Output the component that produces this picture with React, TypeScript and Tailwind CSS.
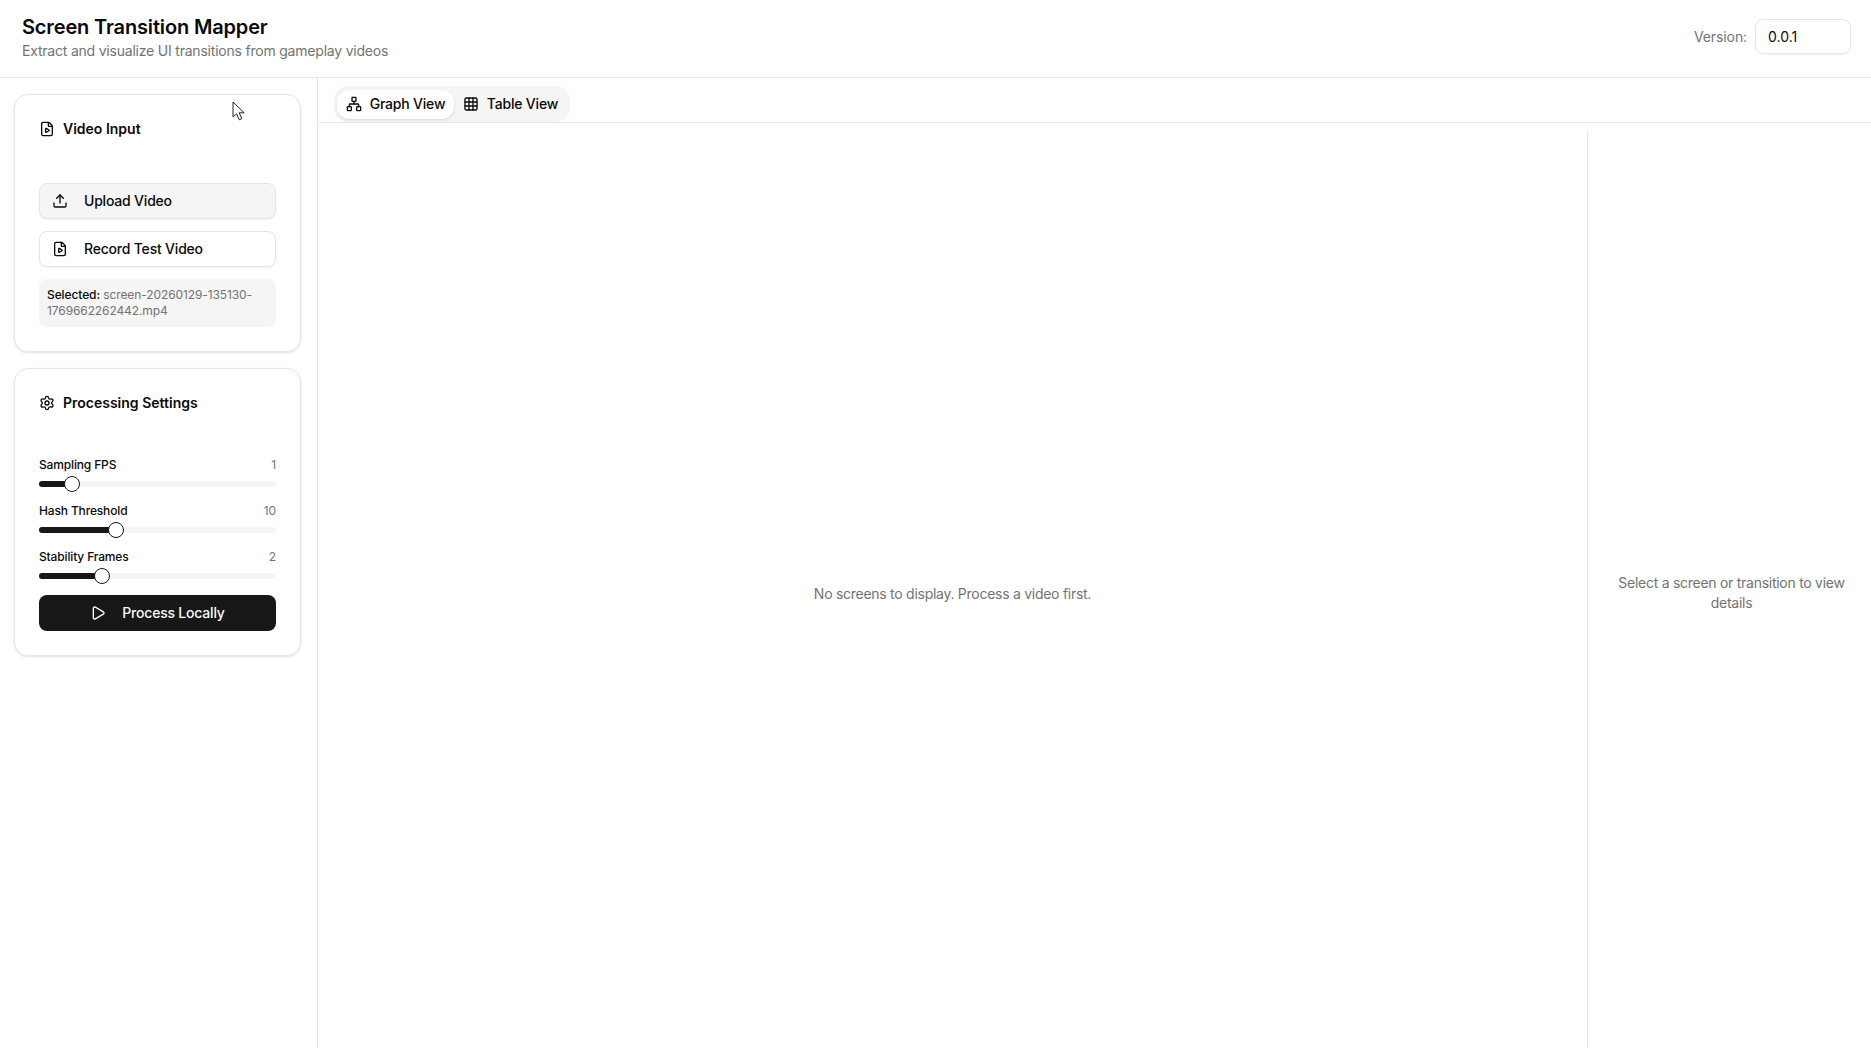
import { FilePlay, Grid3x3, Network, Play, Settings, Upload } from 'lucide-react'

const sliders = [
  { label: 'Sampling FPS', value: '1', percent: 14 },
  { label: 'Hash Threshold', value: '10', percent: 32.5 },
  { label: 'Stability Frames', value: '2', percent: 26.5 },
]

function Cursor() {
  return (
    <svg className="absolute left-[232px] top-[101px] h-[20px] w-[14px]" viewBox="0 0 14 20">
      <path
        d="M1 1v15l3.6-3.2 2.6 6 2.6-1.1-2.6-5.9h5z"
        fill="#fff"
        stroke="#222"
        strokeWidth="1"
        strokeLinejoin="round"
      />
    </svg>
  )
}

export default function App() {
  return (
    <div className="relative flex h-[1048px] flex-col overflow-hidden bg-white font-['Inter',sans-serif] text-[#0a0a0a]">
      {/* Header */}
      <header className="flex h-[78px] shrink-0 items-center justify-between border-b border-[#e5e5e5] pb-[4px] pl-[22px] pr-[20px]">
        <div>
          <h1 className="text-[20px] font-semibold leading-[28px] tracking-[-0.15px]">Screen Transition Mapper</h1>
          <p className="text-[14px] leading-[20px] tracking-[-0.21px] text-[#737373]">
            Extract and visualize UI transitions from gameplay videos
          </p>
        </div>
        <div className="flex items-center gap-2">
          <span className="text-[14px] tracking-[-0.1px] text-[#737373]">Version:</span>
          <div className="flex h-[35px] w-[96px] items-center rounded-lg border border-[#e5e5e5] pl-3 text-[14px] shadow-xs">
            0.0.1
          </div>
        </div>
      </header>

      <div className="flex min-h-0 flex-1">
        {/* Sidebar */}
        <aside className="flex w-[318px] shrink-0 flex-col gap-4 border-r border-[#e5e5e5] pl-[14px] pr-[16px] pt-[16px]">
          <section className="flex h-[258px] flex-col rounded-[14px] border border-[#e5e5e5] px-[24px] pt-[24px] shadow-sm">
            <h2 className="flex items-center gap-2 text-[14px] font-semibold leading-[20px]">
              <FilePlay className="h-4 w-4" />
              Video Input
            </h2>
            <div className="mt-[44px] flex flex-col gap-3">
              <button className="flex h-9 items-center gap-4 rounded-lg border border-[#e5e5e5] bg-[#f5f5f5] pb-px pl-[12px] text-[14px] font-medium tracking-[-0.2px] shadow-xs">
                <Upload className="h-4 w-4" />
                Upload Video
              </button>
              <button className="flex h-9 items-center gap-4 rounded-lg border border-[#e5e5e5] bg-white pb-px pl-[12px] text-[14px] font-medium tracking-[-0.2px] shadow-xs">
                <FilePlay className="h-4 w-4" />
                Record Test Video
              </button>
              <div className="rounded-lg bg-[#f5f5f5] px-2 py-2 text-[12px] leading-[16px] tracking-[-0.1px] text-[#737373]">
                <span className="font-medium text-[#0a0a0a]">Selected:</span> screen-20260129-135130-1769662262442.mp4
              </div>
            </div>
          </section>

          <section className="flex h-[288px] flex-col rounded-[14px] border border-[#e5e5e5] px-[24px] pt-[24px] shadow-sm">
            <h2 className="flex items-center gap-2 text-[14px] font-semibold leading-[20px]">
              <Settings className="h-4 w-4" />
              Processing Settings
            </h2>
            <div className="mt-[44px] flex flex-col gap-4">
              {sliders.map((s) => (
                <div key={s.label}>
                  <div className="flex justify-between text-[12px] leading-[16px] tracking-[-0.15px]">
                    <span className="font-medium">{s.label}</span>
                    <span className="text-[#737373]">{s.value}</span>
                  </div>
                  <div className="relative mt-[8px] h-[6px] rounded-full bg-[#f5f5f5]">
                    <div className="h-full rounded-full bg-[#171717]" style={{ width: `${s.percent}%` }} />
                    <div
                      className="absolute top-1/2 h-4 w-4 -translate-x-1/2 -translate-y-1/2 rounded-full border border-[#171717] bg-white"
                      style={{ left: `${s.percent}%` }}
                    />
                  </div>
                </div>
              ))}
            </div>
            <button className="mt-4 flex h-9 items-center justify-center gap-4 rounded-lg bg-[#171717] pb-px text-[14px] font-medium tracking-[-0.2px] text-[#fafafa]">
              <Play className="h-4 w-4" />
              Process Locally
            </button>
          </section>
        </aside>

        {/* Main */}
        <main className="flex min-w-0 flex-1 flex-col">
          <div className="h-[45px] shrink-0 border-b border-[#e5e5e5] pl-[16px] pt-[8px]">
            <div className="inline-flex h-[36px] items-center rounded-[14px] bg-[#f5f5f5] p-[3px] text-[14px] font-medium tracking-[-0.2px]">
              <div className="flex h-[29px] w-[117px] items-center justify-center gap-2 rounded-[12px] bg-white pb-px shadow-sm">
                <Network className="h-4 w-4" />
                Graph View
              </div>
              <div className="flex h-[29px] w-[113px] items-center justify-center gap-2 rounded-[12px] pb-px">
                <Grid3x3 className="h-4 w-4" />
                Table View
              </div>
            </div>
          </div>
          <div className="flex min-h-0 flex-1 pt-[8px] text-[14px] tracking-[-0.27px] text-[#737373]">
            <div className="flex flex-1 items-center justify-center pt-[7px]">
              No screens to display. Process a video first.
            </div>
            <div className="flex w-[284px] shrink-0 items-center justify-center border-l border-[#e5e5e5] pl-[18px] pr-[14px] pt-[7px] text-center leading-[20px]">
              Select a screen or transition to view details
            </div>
          </div>
        </main>
      </div>
      <Cursor />
    </div>
  )
}
